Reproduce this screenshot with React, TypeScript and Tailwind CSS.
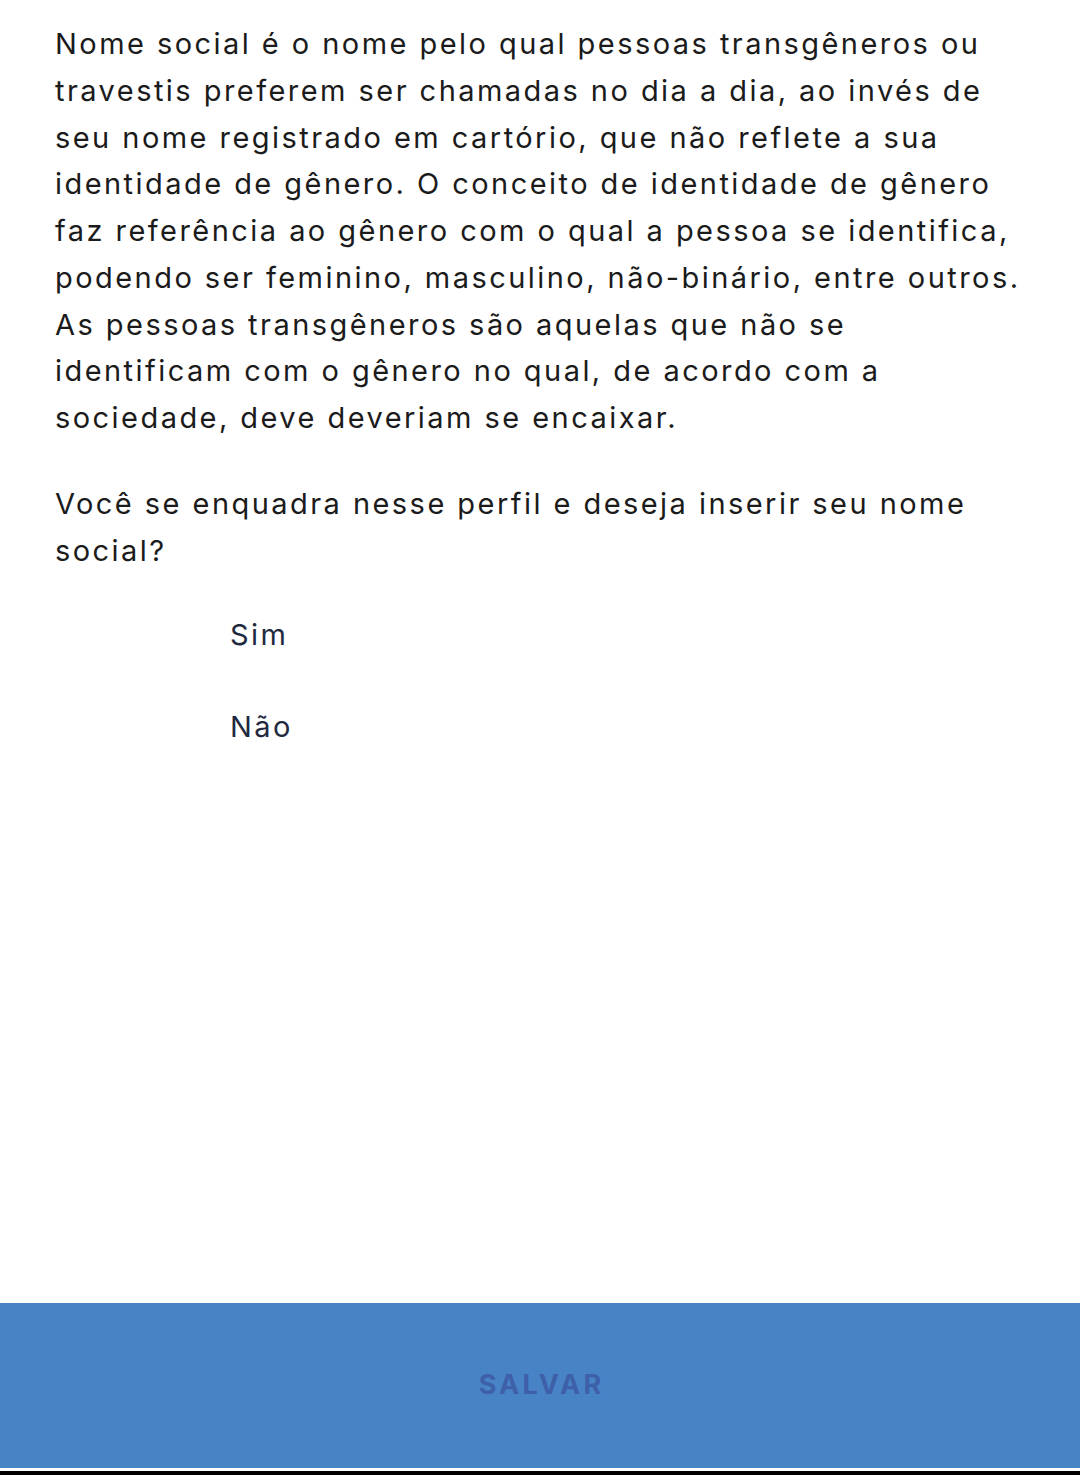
export default function App() {
  const intro = [
    "Nome social é o nome pelo qual pessoas transgêneros ou",
    "travestis preferem ser chamadas no dia a dia, ao invés de",
    "seu nome registrado em cartório, que não reflete a sua",
    "identidade de gênero. O conceito de identidade de gênero",
    "faz referência ao gênero com o qual a pessoa se identifica,",
    "podendo ser feminino, masculino, não-binário, entre outros.",
    "As pessoas transgêneros são aquelas que não se",
    "identificam com o gênero no qual, de acordo com a",
    "sociedade, deve deveriam se encaixar.",
  ];
  const question = ["Você se enquadra nesse perfil e deseja inserir seu nome", "social?"];

  return (
    <div
      className="w-[1080px] h-[1475px] bg-white flex flex-col"
      style={{ fontFamily: "Inter, 'Noto Sans', sans-serif" }}
    >
      {/* Texto */}
      <main className="flex-1 flex flex-col pl-[55px] pt-[21px]">
        <p className="text-[29px] leading-[46.75px] text-[#1b1b1b] tracking-[2.45px]">
          {intro.map((l, i) => (
            <span key={i} className="block whitespace-nowrap">
              {l}
            </span>
          ))}
        </p>
        <p className="mt-[39px] text-[29px] leading-[46.75px] text-[#1b1b1b] tracking-[2.45px]">
          {question.map((l, i) => (
            <span key={i} className="block whitespace-nowrap">
              {l}
            </span>
          ))}
        </p>

        {/* Opções */}
        <div className="flex flex-col gap-[46px] pl-[175px] mt-[38px] text-[29px] leading-[46px] text-[#1f2940] tracking-[2.45px]">
          <span>Sim</span>
          <span>Não</span>
        </div>
      </main>

      {/* Botão salvar */}
      <button className="h-[165px] w-full bg-[#4883c6] flex items-center justify-center">
        <span className="text-[27px] font-bold tracking-[3.2px] text-[#3e60a8] pl-[3px]">SALVAR</span>
      </button>
      <div className="h-[3px] bg-white" />
      <div className="h-[4px] bg-black" />
    </div>
  );
}
